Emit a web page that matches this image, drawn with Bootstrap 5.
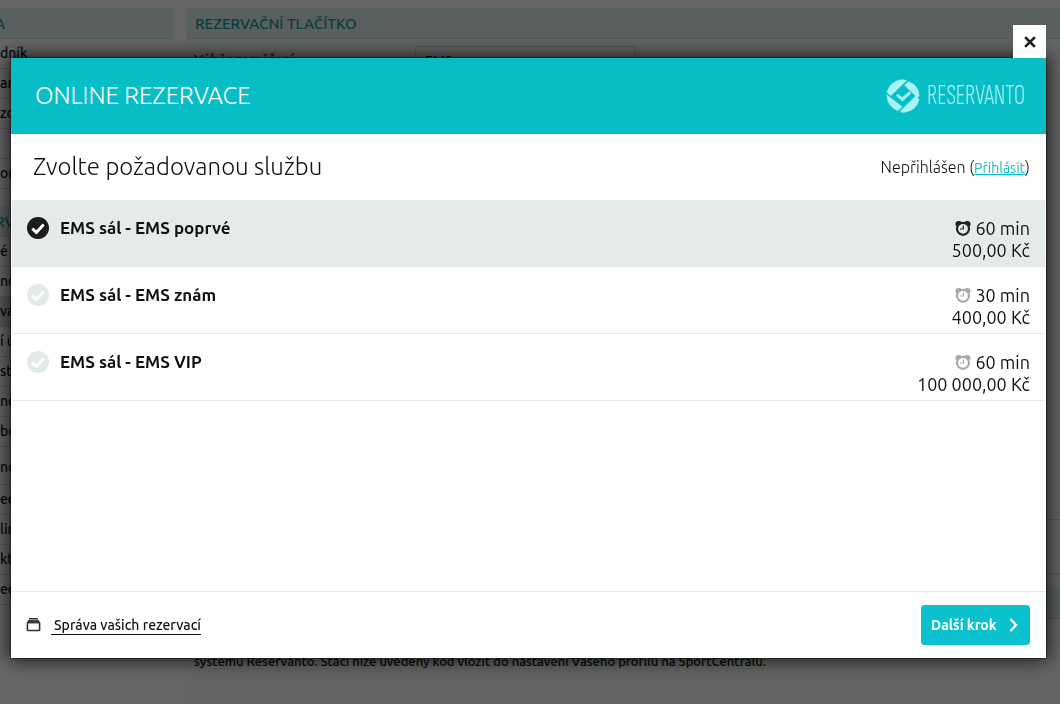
<!DOCTYPE html>
<html lang="cs">
<head>
<meta charset="utf-8">
<meta name="viewport" content="width=device-width, initial-scale=1">
<title>Online rezervace</title>
<link href="https://cdn.jsdelivr.net/npm/bootstrap@5.3.0/dist/css/bootstrap.min.css" rel="stylesheet">
<style>
  :root { --teal: #08bec6; --mist: #e5ebeb; }
  body { font-family: Ubuntu, "Noto Sans", sans-serif; color: #111; font-size: 14px; background: #fff; }

  /* page behind the dialog */
  .page { min-height: 100vh; padding-top: 8px; gap: 13px; overflow: hidden; font-weight: 500; }
  .side { width: 173px; flex: none; }
  .panel-head { height: 31px; padding: 0 9px; background: #e1efee; border-bottom: 1px solid #cfdcda; color: #08a09c; font-size: 15px; line-height: 31px; margin: 0; font-weight: 500; }
  .side .panel-head { padding: 0; text-indent: -5px; }
  .side ul { margin-bottom: 17px; }
  .side a { display: block; height: 30px; line-height: 28px; color: #111; text-decoration: none; border-bottom: 1px solid #d5dddc; white-space: nowrap; overflow: hidden; }
  .side a.current { background: #d3e2e1; }
  .side li.group-start a { height: 38px; line-height: 40px; }
  .main-panel { background: #f7fbf9; }
  .main-panel .form-area { flex: 0 0 481px; padding: 7px 8px 0; border-bottom: 1px solid #cfdcda; }
  .form-area label { width: 221px; }
  .form-area select { width: 220px; height: 30px; font-size: 14px; padding: 0 9px; border: 1px solid #d3dad8; border-radius: 0; background: #fff; appearance: none; color: #111; }
  .save-area { height: 54px; border-bottom: 1px solid #cfdcda; margin-bottom: 14px; }
  .main-panel p { margin: 33px 8px 0; font-size: 13px; }

  /* dialog */
  .modal-backdrop.show { opacity: .6; }
  .modal-dialog { max-width: none; margin: 58px 14px 46px 11px; }
  .modal-content { min-height: calc(100vh - 104px); border: 0; border-radius: 0; box-shadow: 0 0 2px #000, 0 0 18px 2px rgba(0,0,0,.8); color: #111; }
  .modal-header { height: 76px; background: var(--teal); color: #fff; padding: 0 21px 0 24px; border: 0; border-radius: 0; }
  .modal-title { font-size: 24px; font-weight: 300; }
  .brand { color: #a9f3f6; gap: 7px; text-decoration: none; }
  .brand span { font: 300 28px/34px "Sofia Sans Extra Condensed", "Roboto Condensed", sans-serif; }
  .close-tab { position: absolute; right: 0; bottom: 100%; width: 33px; height: 33px; border: 0; padding: 0; background: #fff; color: #222; }
  .login-bar { height: 66px; padding: 0 16px 0 22px; }
  .login-bar h2 { font-size: 24px; font-weight: 300; margin: 0; }
  .login-bar div { font-size: 16px; font-weight: 300; }
  .login-bar a { color: var(--teal); font-size: 14px; font-weight: 400; }
  .services { margin: 0 1px; }
  .service { height: 67px; padding: 17px 15px 0 15px; gap: 11px; border-bottom: 1px solid #e6e9e9; cursor: pointer; line-height: 22px; font-size: 18px; }
  .service:has(input:checked) { background: var(--mist); }
  .service .form-check-input { width: 22px; height: 22px; margin: 0; border: 0; background-color: #e3eaea; background-size: 22px; background-image: url("data:image/svg+xml,%3Csvg xmlns='http://www.w3.org/2000/svg' viewBox='0 0 22 22'%3E%3Cpath d='M5.3 11.6l4.1 3.8 7.3-8' fill='none' stroke='%23fff' stroke-width='3'/%3E%3C/svg%3E"); }
  .service .form-check-input:checked { background-color: #1c1c1c; }
  .service strong { font-weight: 600; font-size: 17px; }
  .clock { color: #aaa; vertical-align: -1px; }
  .service:has(input:checked) .clock { color: #222; }
  .modal-footer { height: 67px; padding: 0 16px 0 15px; border-top: 1px solid #dfe9ea; border-radius: 0; }
  .modal-footer > * { margin: 0; }
  .manage { color: #111; font-size: 14px; font-weight: 500; gap: 10px; text-decoration: none; }
  .manage span { border-bottom: 1px solid #111; padding-left: 3px; line-height: 18px; }
  .btn-next { --bs-btn-color: #fff; --bs-btn-bg: #0bc1cd; --bs-btn-hover-color: #fff; --bs-btn-hover-bg: #08aab4; --bs-btn-border-width: 0; width: 109px; height: 40px; padding: 0 10px; border-radius: 4px; font-size: 14px; font-weight: 600; }
</style>
</head>
<body>
<svg class="d-none">
  <symbol id="clock" viewBox="0 0 16 16">
    <circle cx="8" cy="8.800" r="6" fill="none" stroke="currentColor" stroke-width="2.200"/>
    <path d="M8.300 5.500V9H5" fill="none" stroke="currentColor" stroke-width="1.200"/>
    <path d="M.6 5.600C-.2 2 1.600.4 5.600 1.200L7 3 2.500 6.500zM15.400 5.600C16.200 2 14.400.4 10.400 1.200L9 3l4.500 3.500z" fill="currentColor"/>
  </symbol>
</svg>

<div class="page d-flex">
  <nav class="side">
    <h2 class="panel-head">A</h2>
    <ul class="list-unstyled">
      <li><a href="#">dník</a></li>
      <li><a href="#">ar</a></li>
      <li><a href="#">zo</a></li>
      <li><a href="#">&nbsp;</a></li>
      <li><a href="#">ory</a></li>
    </ul>
    <h2 class="panel-head">RV</h2>
    <ul class="list-unstyled">
      <li><a href="#">é</a></li>
      <li><a href="#">no</a></li>
      <li><a href="#" class="current">va</a></li>
      <li><a href="#">í ú</a></li>
      <li><a href="#">st</a></li>
      <li><a href="#">ne</a></li>
      <li><a href="#">bo</a></li>
      <li class="group-start"><a href="#">nc</a></li>
      <li><a href="#">ed</a></li>
      <li><a href="#">lin</a></li>
      <li><a href="#">kt</a></li>
      <li><a href="#">ed</a></li>
    </ul>
  </nav>
  <main class="main-panel flex-grow-1 d-flex flex-column">
    <h2 class="panel-head">REZERVAČNÍ TLAČÍTKO</h2>
    <div class="form-area d-flex align-items-start">
      <label for="focus" class="pt-1">Výběr zaměření:</label>
      <select id="focus"><option>EMS</option></select>
    </div>
    <div class="save-area"></div>
    <div class="panel-head"></div>
    <p>systému Reservanto. Stačí níže uvedený kód vložit do nastavení Vašeho profilu na SportCentrálu.</p>
  </main>
</div>

<div class="modal-backdrop show"></div>
<div class="modal show d-block" tabindex="-1" role="dialog" aria-labelledby="dialogTitle">
  <div class="modal-dialog">
    <form class="modal-content">
      <button type="button" class="close-tab" aria-label="Zavřít">
        <svg width="12" height="12" viewBox="0 0 12 12"><path d="M2 2l8 8M10 2l-8 8" stroke="currentColor" stroke-width="2.600" stroke-linecap="square"/></svg>
      </button>
      <header class="modal-header">
        <h1 class="modal-title" id="dialogTitle">ONLINE REZERVACE</h1>
        <a href="#" class="brand d-flex align-items-center">
          <svg width="34" height="34" viewBox="0 0 34 34" fill="currentColor">
            <path d="M14 .8Q17.500 0 21 1.200L4.800 17 .6 13Q2 8 6 4.500 9.500 1.500 14 .8z"/>
            <path d="M22.500 2.200L18.300 6.300 31.500 19 33.500 17Q33.500 12 30.500 8 27.500 4 22.500 2.200z"/>
            <path d="M33.300 20.500Q32 26 28 29.500 24 33 19 33.600 16 33.800 13.500 32.800L29.500 16.800z"/>
            <path d="M.6 15.400L16.500 27.700 11.500 32Q6.500 29.800 3.500 25.500.3 20.500.6 15.400z"/>
            <path d="M9.800 16.500l1.800-1.800 4.800 3.600 6.800-6 2 2-8.700 8.200z"/>
          </svg>
          <span>RESERVANTO</span>
        </a>
      </header>
      <div class="login-bar d-flex align-items-center justify-content-between">
        <h2>Zvolte požadovanou službu</h2>
        <div>Nepřihlášen (<a href="#">Přihlásit</a>)</div>
      </div>
      <div class="services flex-grow-1">
        <label class="service d-flex">
          <input class="form-check-input" type="radio" name="service" checked>
          <strong class="flex-grow-1">EMS sál - EMS poprvé</strong>
          <span class="text-end"><svg class="clock" width="16" height="16"><use href="#clock"/></svg> 60 min<br>500,00 Kč</span>
        </label>
        <label class="service d-flex">
          <input class="form-check-input" type="radio" name="service">
          <strong class="flex-grow-1">EMS sál - EMS znám</strong>
          <span class="text-end"><svg class="clock" width="16" height="16"><use href="#clock"/></svg> 30 min<br>400,00 Kč</span>
        </label>
        <label class="service d-flex">
          <input class="form-check-input" type="radio" name="service">
          <strong class="flex-grow-1">EMS sál - EMS VIP</strong>
          <span class="text-end"><svg class="clock" width="16" height="16"><use href="#clock"/></svg> 60 min<br>100 000,00 Kč</span>
        </label>
      </div>
      <footer class="modal-footer justify-content-between">
        <a href="#" class="manage d-flex align-items-center">
          <svg width="15" height="15" viewBox="0 0 15 15"><path d="M3 0h9v1.500H3z" fill="#333"/><path d="M2 2h11l1 3.300H1z" fill="#444"/><rect x="1.400" y="4.500" width="12.200" height="8" rx=".8" fill="none" stroke="#333" stroke-width="1.600"/></svg>
          <span>Správa vašich rezervací</span>
        </a>
        <button type="submit" class="btn btn-next d-flex align-items-center justify-content-between">Další krok
          <svg width="14" height="14" viewBox="0 0 14 14"><path d="M4.500 1L10 7l-5.500 6" fill="none" stroke="#fff" stroke-width="2.400"/></svg>
        </button>
      </footer>
    </form>
  </div>
</div>
<script src="https://cdn.jsdelivr.net/npm/bootstrap@5.3.0/dist/js/bootstrap.bundle.min.js"></script>
</body>
</html>
